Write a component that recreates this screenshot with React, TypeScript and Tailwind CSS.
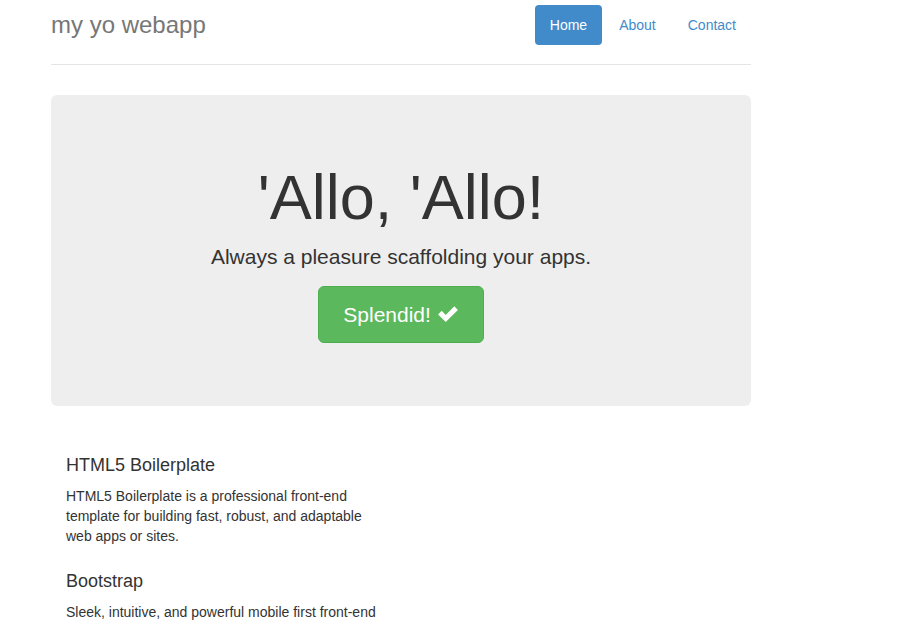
import React from 'react';

function CheckIcon() {
  return (
    <svg viewBox="0 0 24 20" className="inline-block w-[22px] h-[18px] align-[-1px]" fill="currentColor">
      <path d="M1 10.5 L5 6.5 L9.5 11 L19 1.5 L23 5.5 L9.5 19 Z" />
    </svg>
  );
}

export default function App() {
  const links = ['Home', 'About', 'Contact'];

  return (
    <div className="min-h-[624px] bg-white text-[#333] text-[14px] leading-[20px]" style={{ fontFamily: '"Liberation Sans", Arial, sans-serif' }}>
      <div className="ml-[51px] w-[700px]">
        {/* Header */}
        <div className="flex items-start justify-between border-b border-[#e5e5e5] pt-[5px] pb-[19px]">
          <h3 className="text-[24px] leading-[40px] text-[#777]">my yo webapp</h3>
          <ul className="flex gap-[2px]">
            {links.map((l, i) => (
              <li key={l}>
                <a
                  href="#"
                  className={
                    i === 0
                      ? 'block rounded-[4px] bg-[#428bca] px-[15px] py-[10px] text-white'
                      : 'block rounded-[4px] px-[15px] py-[10px] text-[#428bca]'
                  }
                >
                  {l}
                </a>
              </li>
            ))}
          </ul>
        </div>

        {/* Jumbotron */}
        <div className="mt-[30px] rounded-[6px] bg-[#eee] px-[60px] pt-[48px] pb-[48px] text-center">
          <h1 className="mt-[20px] mb-[10px] text-[63px] leading-[1.1]">'Allo, 'Allo!</h1>
          <p className="mb-[14px] text-[21px] leading-[30px]">Always a pleasure scaffolding your apps.</p>
          <p className="mb-[15px]">
            <a
              href="#"
              className="inline-block rounded-[6px] border border-[#4cae4c] bg-[#5cb85c] px-[24px] py-[14px] text-[21px] leading-[27px] text-white"
            >
              Splendid! <CheckIcon />
            </a>
          </p>
        </div>

        {/* Marketing */}
        <div className="pt-[50px] pl-[15px]">
          <div className="w-[322px]">
            <h4 className="mb-[10px] text-[18px] leading-[1.1]">HTML5 Boilerplate</h4>
            <p>HTML5 Boilerplate is a professional front-end template for building fast, robust, and adaptable web apps or sites.</p>
            <h4 className="mt-[26px] mb-[10px] text-[18px] leading-[1.1]">Bootstrap</h4>
            <p>Sleek, intuitive, and powerful mobile first front-end framework for faster and easier web development.</p>
          </div>
        </div>
      </div>
    </div>
  );
}
